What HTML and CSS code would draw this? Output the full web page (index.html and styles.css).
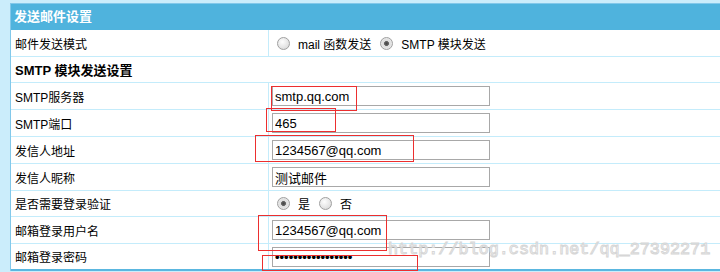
FILE: index.html
```html
<!DOCTYPE html>
<html lang="zh-CN">
<head>
  <meta charset="UTF-8" />
  <title>发送邮件设置</title>
  <link rel="stylesheet" href="styles.css">
</head>
<body>
  <div class="panel">
    <div class="panel-head">发送邮件设置</div>

    <div class="row">
      <div class="label">邮件发送模式</div>
      <div class="value">
        <label class="radio"><input type="radio" name="mode"> mail 函数发送</label>
        <label class="radio"><input type="radio" name="mode" checked> SMTP 模块发送</label>
      </div>
    </div>

    <div class="row row-sub short">
      <div class="sub-title">SMTP 模块发送设置</div>
    </div>

    <div class="row">
      <div class="label">SMTP服务器</div>
      <div class="value"><input class="field" type="text" value="smtp.qq.com"></div>
    </div>
    <div class="row">
      <div class="label">SMTP端口</div>
      <div class="value"><input class="field" type="text" value="465"></div>
    </div>
    <div class="row">
      <div class="label">发信人地址</div>
      <div class="value"><input class="field" type="text" value="1234567@qq.com"></div>
    </div>
    <div class="row">
      <div class="label">发信人昵称</div>
      <div class="value"><input class="field" type="text" value="测试邮件"></div>
    </div>
    <div class="row short">
      <div class="label">是否需要登录验证</div>
      <div class="value">
        <label class="radio"><input type="radio" name="auth" checked> 是</label>
        <label class="radio"><input type="radio" name="auth"> 否</label>
      </div>
    </div>
    <div class="row">
      <div class="label">邮箱登录用户名</div>
      <div class="value"><input class="field" type="text" value="1234567@qq.com"></div>
    </div>
    <div class="row last">
      <div class="label">邮箱登录密码</div>
      <div class="value"><input class="field pass" type="password" value="12345678901234567"></div>
    </div>
  </div>

  <!-- 截图上的标注 -->
  <div class="mark mark-host"></div>
  <div class="mark mark-port"></div>
  <div class="mark mark-from"></div>
  <div class="mark mark-user"></div>
  <div class="mark mark-pass"></div>
  <div class="watermark">http://blog.csdn.net/qq_27392271</div>
</body>
</html>
```

FILE: styles.css
```css
body, html {
  margin: 0;
  padding: 0;
  height: 100%;
  overflow: hidden;
  background: #cbedfb;
  font-family: 'Liberation Sans', 'Noto Sans CJK SC', sans-serif;
  color: #000;
}

.panel {
  margin: 3px 0 0 10px;
  width: 730px;
  background: #fff;
  border-top: 1px solid #82c8ea;
  border-left: 1px solid #82c8ea;
}

.panel-head {
  height: 26px;
  line-height: 26px;
  padding-left: 3px;
  background: #4fb3dd;
  color: #fff;
  font-size: 13px;
  font-weight: bold;
}

.row {
  display: flex;
  align-items: center;
  height: 27px;
  box-sizing: border-box;
  border-bottom: 1px solid #c4ecfb;
  font-size: 12px;
}

.row.short {
  height: 26px;
}

.row.last {
  border-bottom: 2px solid #5ab7e0;
}

.label {
  width: 258px;
  height: 100%;
  box-sizing: border-box;
  padding-left: 4px;
  display: flex;
  align-items: center;
  border-right: 1px solid #c4ecfb;
}

.value {
  padding-left: 3px;
  display: flex;
  align-items: center;
  height: 100%;
}

.sub-title {
  padding-left: 4px;
  font-size: 13px;
  font-weight: bold;
}

.field {
  width: 218px;
  height: 20px;
  box-sizing: border-box;
  margin: 0;
  padding: 0 2px;
  border: 1px solid #a8a8a8;
  background: #fff;
  font-family: 'Liberation Sans', 'Noto Sans CJK SC', sans-serif;
  font-size: 13px;
  color: #000;
  outline: none;
}

.field.pass {
  font-weight: bold;
}

.radio {
  display: flex;
  align-items: center;
  margin-left: 5px;
  margin-right: 4px;
  font-size: 12px;
}

.radio input {
  appearance: none;
  -webkit-appearance: none;
  width: 13px;
  height: 13px;
  margin: 0 8px 0 0;
  border-radius: 50%;
  border: 1px solid #a0a0a0;
  background: radial-gradient(circle at 40% 35%, #fdfdfd 0%, #e4e4e4 60%, #cfcfcf 100%);
  box-sizing: border-box;
}

.radio input:checked {
  background: radial-gradient(circle, #444 0%, #666 28%, #dcdcdc 34%, #e8e8e8 70%, #cdcdcd 100%);
}

.mark {
  position: absolute;
  border: 1px solid #ec2f2f;
  pointer-events: none;
}

.mark-host { left: 271px; top: 86px;  width: 84px;  height: 23px; }
.mark-port { left: 266px; top: 108px; width: 68px;  height: 22px; }
.mark-from { left: 255px; top: 135px; width: 157px; height: 25px; }
.mark-user { left: 258px; top: 215px; width: 127px; height: 34px; }
.mark-pass { left: 262px; top: 255px; width: 154px; height: 14px; }

.watermark {
  position: absolute;
  left: 388px;
  top: 240px;
  font-family: 'Liberation Mono', monospace;
  font-size: 16.8px;
  color: rgba(255, 255, 255, 0.4);
  -webkit-text-stroke: 1px #d6d6d6;
  white-space: nowrap;
  pointer-events: none;
}
```
